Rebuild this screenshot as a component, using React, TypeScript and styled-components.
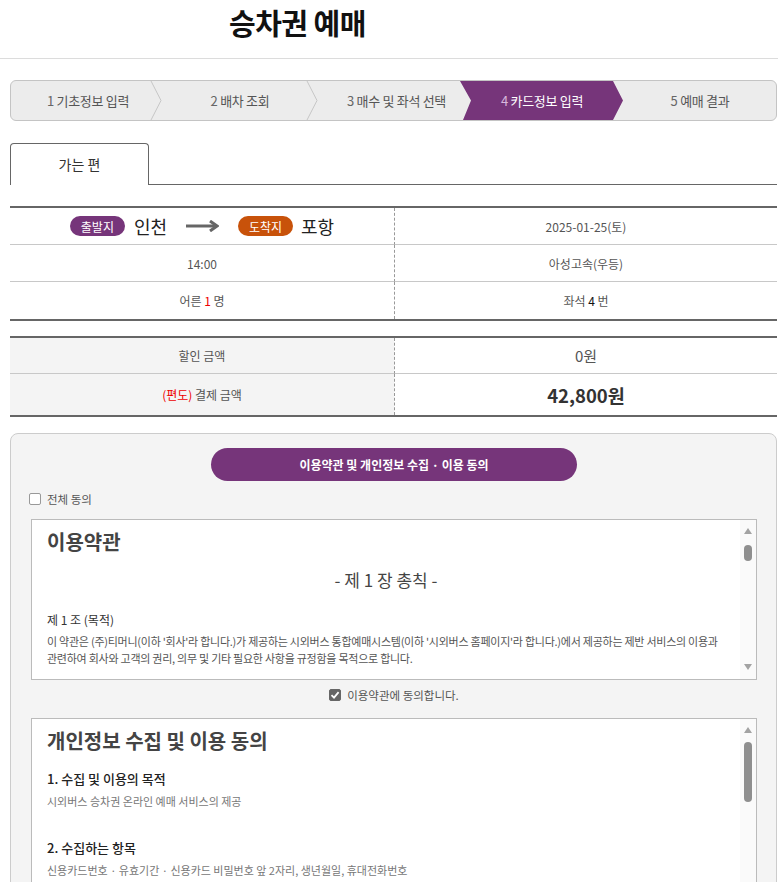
import React from "react";
import styled, { createGlobalStyle } from "styled-components";

const GlobalStyle = createGlobalStyle`
  body {
    margin: 0;
    background: #fff;
    font-family: "Noto Sans CJK KR", "Noto Sans", sans-serif;
    color: #555;
  }
`;

const steps = [
  { no: 1, label: "기초정보 입력", width: 140, pl: 14 },
  { no: 2, label: "배차 조회", width: 156, pl: 22 },
  { no: 3, label: "매수 및 좌석 선택", width: 153, pl: 26 },
  { no: 4, label: "카드정보 입력", width: 163, pl: 11 },
  { no: 5, label: "예매 결과", width: 0, pl: 11 },
];

const Chevron = () => (
  <ChevronSvg width="12" height="41" viewBox="0 0 12 41">
    <polyline points="0.5,0 11,20.5 0.5,41" fill="none" stroke="#c6c6c6" strokeWidth="1" />
  </ChevronSvg>
);

const Scrollbar = ({ thumbTop, thumbHeight }: { thumbTop: number; thumbHeight: number }) => (
  <ScrollBar>
    <ArrowUp />
    <Track>
      <Thumb $top={thumbTop} $height={thumbHeight} />
    </Track>
    <ArrowDown />
  </ScrollBar>
);

const App = () => {
  return (
    <Page>
      <GlobalStyle />
      <Header>
        <Title>승차권 예매</Title>
      </Header>

      <Content>
        <StepBar>
          {steps.map((s, i) => (
            <Step key={s.no} $width={s.width} $pl={s.pl} $active={s.no === 4}>
              <span>
                <StepNo $active={s.no === 4}>{s.no}</StepNo> {s.label}
              </span>
              {i < 2 && <Chevron />}
            </Step>
          ))}
        </StepBar>

        <TabRow>
          <Tab>가는 편</Tab>
          <TabFill />
        </TabRow>

        <InfoTable>
          <Cell>
            <Route>
              <Badge $color="#76357a">출발지</Badge>
              <City>인천</City>
              <RouteArrow width="33" height="12" viewBox="0 0 33 12">
                <line x1="0" y1="6" x2="30" y2="6" stroke="#666" strokeWidth="3" />
                <polyline points="24,1 31,6 24,11" fill="none" stroke="#666" strokeWidth="3" />
              </RouteArrow>
              <Badge $color="#c8520a">도착지</Badge>
              <City $tight>포항</City>
            </Route>
          </Cell>
          <Cell $right>2025-01-25(토)</Cell>
          <Cell $h={37}>14:00</Cell>
          <Cell $right $h={37}>아성고속(우등)</Cell>
          <Cell>
            <span>
              어른 <Red>1</Red> 명
            </span>
          </Cell>
          <Cell $right>
            <span>
              좌석 <Dark>4</Dark> 번
            </span>
          </Cell>
        </InfoTable>

        <PriceTable>
          <PriceLabel $h={36}>할인 금액</PriceLabel>
          <PriceValue $h={36}>0원</PriceValue>
          <PriceLabel $h={41}>
            <span>
              <Red>(편도)</Red> 결제 금액
            </span>
          </PriceLabel>
          <PriceValue $h={41} $big>
            42,800원
          </PriceValue>
        </PriceTable>

        <AgreePanel>
          <AgreeButton>이용약관 및 개인정보 수집 · 이용 동의</AgreeButton>
          <CheckRow>
            <CheckBox />
            <CheckLabel>전체 동의</CheckLabel>
          </CheckRow>

          <TermsBox $h={161}>
            <TermsBody $pt={8}>
              <TermsHeading>이용약관</TermsHeading>
              <Chapter>- 제 1 장 총칙 -</Chapter>
              <Article>제 1 조 (목적)</Article>
              <Para $mt={4} $tight>
                이 약관은 (주)티머니(이하 '회사'라 합니다.)가 제공하는 시외버스 통합예매시스템(이하 '시외버스 홈페이지'라 합니다.)에서 제공하는 제반 서비스의 이용과
                관련하여 회사와 고객의 권리, 의무 및 기타 필요한 사항을 규정함을 목적으로 합니다.
              </Para>
            </TermsBody>
            <Scrollbar thumbTop={2} thumbHeight={16} />
          </TermsBox>

          <CheckRow $center>
            <CheckBox $checked>
              <svg width="10" height="10" viewBox="0 0 10 10">
                <polyline points="1.5,5.2 4,7.6 8.6,2.2" fill="none" stroke="#fff" strokeWidth="1.8" />
              </svg>
            </CheckBox>
            <CheckLabel>이용약관에 동의합니다.</CheckLabel>
          </CheckRow>

          <TermsBox $h={180}>
            <TermsBody $pt={8}>
              <TermsHeading>개인정보 수집 및 이용 동의</TermsHeading>
              <Section $mt={14}>1. 수집 및 이용의 목적</Section>
              <Para $mt={4} $light>
                시외버스 승차권 온라인 예매 서비스의 제공
              </Para>
              <Section $mt={28}>2. 수집하는 항목</Section>
              <Para $mt={4} $light>
                신용카드번호 · 유효기간 · 신용카드 비밀번호 앞 2자리, 생년월일, 휴대전화번호
              </Para>
            </TermsBody>
            <Scrollbar thumbTop={0} thumbHeight={60} />
          </TermsBox>
        </AgreePanel>
      </Content>
    </Page>
  );
};

const Page = styled.div`
  width: 778px;
  overflow: hidden;
`;

const Header = styled.header`
  height: 58px;
  border-bottom: 1px solid #dcdcdc;
  display: flex;
  align-items: center;
  padding-left: 229px;
`;

const Title = styled.h1`
  margin: 0 0 14px;
  font-size: 29px;
  line-height: 36px;
  font-weight: 700;
  color: #111;
  letter-spacing: -0.5px;
`;

const Content = styled.div`
  padding: 21px 1px 0 10px;
`;

const StepBar = styled.div`
  display: flex;
  height: 41px;
  box-sizing: border-box;
  border: 1px solid #c4c4c4;
  border-radius: 6px;
  background: #ececec;
  overflow: hidden;
`;

const Step = styled.div<{ $width: number; $pl: number; $active?: boolean }>`
  position: relative;
  ${(p) => (p.$width ? `width: ${p.$width}px; flex: none;` : "flex: 1;")}
  box-sizing: border-box;
  padding-left: ${(p) => p.$pl}px;
  padding-right: ${(p) => (p.$active ? 10 : 0)}px;
  display: flex;
  align-items: center;
  justify-content: center;
  font-size: 13px;
  letter-spacing: -0.3px;
  color: ${(p) => (p.$active ? "#fff" : "#555")};
  white-space: pre;
  ${(p) =>
    p.$active &&
    `
    background: #76357a;
    margin-right: -10px;
    z-index: 1;
    clip-path: polygon(0 0, calc(100% - 10px) 0, 100% 50%, calc(100% - 10px) 100%, 3px 100%, 11px 50%);
  `}
`;

const StepNo = styled.span<{ $active?: boolean }>`
  color: ${(p) => (p.$active ? "#d8b8dd" : "#666")};
`;

const ChevronSvg = styled.svg`
  position: absolute;
  right: -11px;
  top: -1px;
  z-index: 2;
`;

const TabRow = styled.div`
  display: flex;
  margin-top: 22px;
  height: 42px;
`;

const Tab = styled.div`
  width: 139px;
  box-sizing: border-box;
  border: 1px solid #666;
  border-bottom: none;
  border-radius: 4px 4px 0 0;
  display: flex;
  align-items: center;
  justify-content: center;
  font-size: 14px;
  color: #333;
  padding-bottom: 1px;
`;

const TabFill = styled.div`
  flex: 1;
  border-bottom: 1px solid #666;
`;

const InfoTable = styled.div`
  margin-top: 21px;
  display: grid;
  grid-template-columns: 384px 1fr;
  border-top: 2px solid #666;
  border-bottom: 2px solid #666;
  & > div:nth-last-child(-n + 2) {
    border-bottom: none;
  }
`;

const Cell = styled.div<{ $right?: boolean; $h?: number }>`
  height: ${(p) => p.$h ?? 37}px;
  box-sizing: border-box;
  display: flex;
  align-items: center;
  justify-content: center;
  font-size: 12px;
  color: #555;
  border-bottom: 1px solid #c8c8c8;
  ${(p) => p.$right && "border-left: 1px dashed #999;"}
`;

const Route = styled.div`
  display: flex;
  align-items: center;
`;

const Badge = styled.span<{ $color: string }>`
  width: 55px;
  height: 20px;
  border-radius: 10px;
  background: ${(p) => p.$color};
  color: #fff;
  font-size: 12px;
  display: flex;
  align-items: center;
  justify-content: center;
`;

const City = styled.span<{ $tight?: boolean }>`
  font-size: 18px;
  color: #222;
  margin-left: ${(p) => (p.$tight ? 8 : 9)}px;
  margin-right: ${(p) => (p.$tight ? 0 : 19)}px;
`;

const RouteArrow = styled.svg`
  margin-right: 19px;
`;

const Red = styled.span`
  color: #e00;
`;

const Dark = styled.span`
  color: #111;
`;

const PriceTable = styled.div`
  margin-top: 15px;
  display: grid;
  grid-template-columns: 384px 1fr;
  border-top: 2px solid #666;
  border-bottom: 2px solid #666;
  & > div:nth-child(-n + 2) {
    border-bottom: 1px solid #c8c8c8;
  }
`;

const PriceLabel = styled.div<{ $h: number }>`
  height: ${(p) => p.$h}px;
  box-sizing: border-box;
  background: #f4f4f4;
  display: flex;
  align-items: center;
  justify-content: center;
  font-size: 12px;
  color: #555;
`;

const PriceValue = styled.div<{ $h: number; $big?: boolean }>`
  height: ${(p) => p.$h}px;
  box-sizing: border-box;
  border-left: 1px dashed #999;
  display: flex;
  align-items: center;
  justify-content: center;
  font-size: ${(p) => (p.$big ? 18.5 : 15)}px;
  font-weight: ${(p) => (p.$big ? 700 : 400)};
  color: ${(p) => (p.$big ? "#333" : "#555")};
`;

const AgreePanel = styled.section`
  margin-top: 16px;
  background: #f4f4f4;
  border: 1px solid #ccc;
  border-radius: 8px;
  padding: 14px 19px 30px 20px;
  display: flex;
  flex-direction: column;
`;

const AgreeButton = styled.div`
  align-self: center;
  width: 366px;
  height: 33px;
  border-radius: 17px;
  background: #76357a;
  color: #fff;
  font-size: 12px;
  font-weight: 700;
  display: flex;
  align-items: center;
  justify-content: center;
`;

const CheckRow = styled.div<{ $center?: boolean }>`
  display: flex;
  align-items: center;
  gap: 6px;
  height: 20px;
  margin: ${(p) => (p.$center ? "5px 0 13px" : "8px 0 10px -2px")};
  justify-content: ${(p) => (p.$center ? "center" : "flex-start")};
`;

const CheckBox = styled.span<{ $checked?: boolean }>`
  width: 12px;
  height: 12px;
  box-sizing: border-box;
  border-radius: 2px;
  border: 1px solid ${(p) => (p.$checked ? "#666" : "#999")};
  background: ${(p) => (p.$checked ? "#666" : "#fff")};
  display: flex;
  align-items: center;
  justify-content: center;
`;

const CheckLabel = styled.span`
  font-size: 11.5px;
  color: #555;
`;

const TermsBox = styled.div<{ $h: number }>`
  height: ${(p) => p.$h}px;
  box-sizing: border-box;
  border: 1px solid #bbb;
  background: #fff;
  display: flex;
`;

const TermsBody = styled.div<{ $pt: number }>`
  flex: 1;
  overflow: hidden;
  padding: ${(p) => p.$pt}px 15px 0 15px;
`;

const TermsHeading = styled.h3`
  margin: 0;
  font-size: 20px;
  line-height: 28px;
  font-weight: 700;
  color: #444;
`;

const Chapter = styled.div`
  margin-top: 12px;
  font-size: 17px;
  line-height: 24px;
  text-align: center;
  color: #444;
`;

const Article = styled.div`
  margin-top: 19px;
  font-size: 12px;
  line-height: 18px;
  color: #333;
`;

const Section = styled.div<{ $mt: number }>`
  margin-top: ${(p) => p.$mt}px;
  font-size: 13px;
  line-height: 20px;
  font-weight: 500;
  color: #222;
`;

const Para = styled.p<{ $mt: number; $light?: boolean; $tight?: boolean }>`
  margin: ${(p) => p.$mt}px 0 0;
  font-size: 11px;
  line-height: 17px;
  letter-spacing: ${(p) => (p.$tight ? -0.25 : 0)}px;
  color: ${(p) => (p.$light ? "#777" : "#555")};
`;

const ScrollBar = styled.div`
  width: 16px;
  flex: none;
  background: #fafafa;
  display: flex;
  flex-direction: column;
  align-items: center;
  padding: 8px 0 9px;
`;

const ArrowUp = styled.span`
  width: 0;
  height: 0;
  border-left: 4px solid transparent;
  border-right: 4px solid transparent;
  border-bottom: 6px solid #a3a3a3;
`;

const ArrowDown = styled.span`
  width: 0;
  height: 0;
  border-left: 4px solid transparent;
  border-right: 4px solid transparent;
  border-top: 6px solid #a3a3a3;
`;

const Track = styled.div`
  flex: 1;
  width: 8px;
  padding-top: 9px;
`;

const Thumb = styled.div<{ $top: number; $height: number }>`
  margin-top: ${(p) => p.$top}px;
  height: ${(p) => p.$height}px;
  border-radius: 4px;
  background: #8f8f8f;
`;

export default App;
